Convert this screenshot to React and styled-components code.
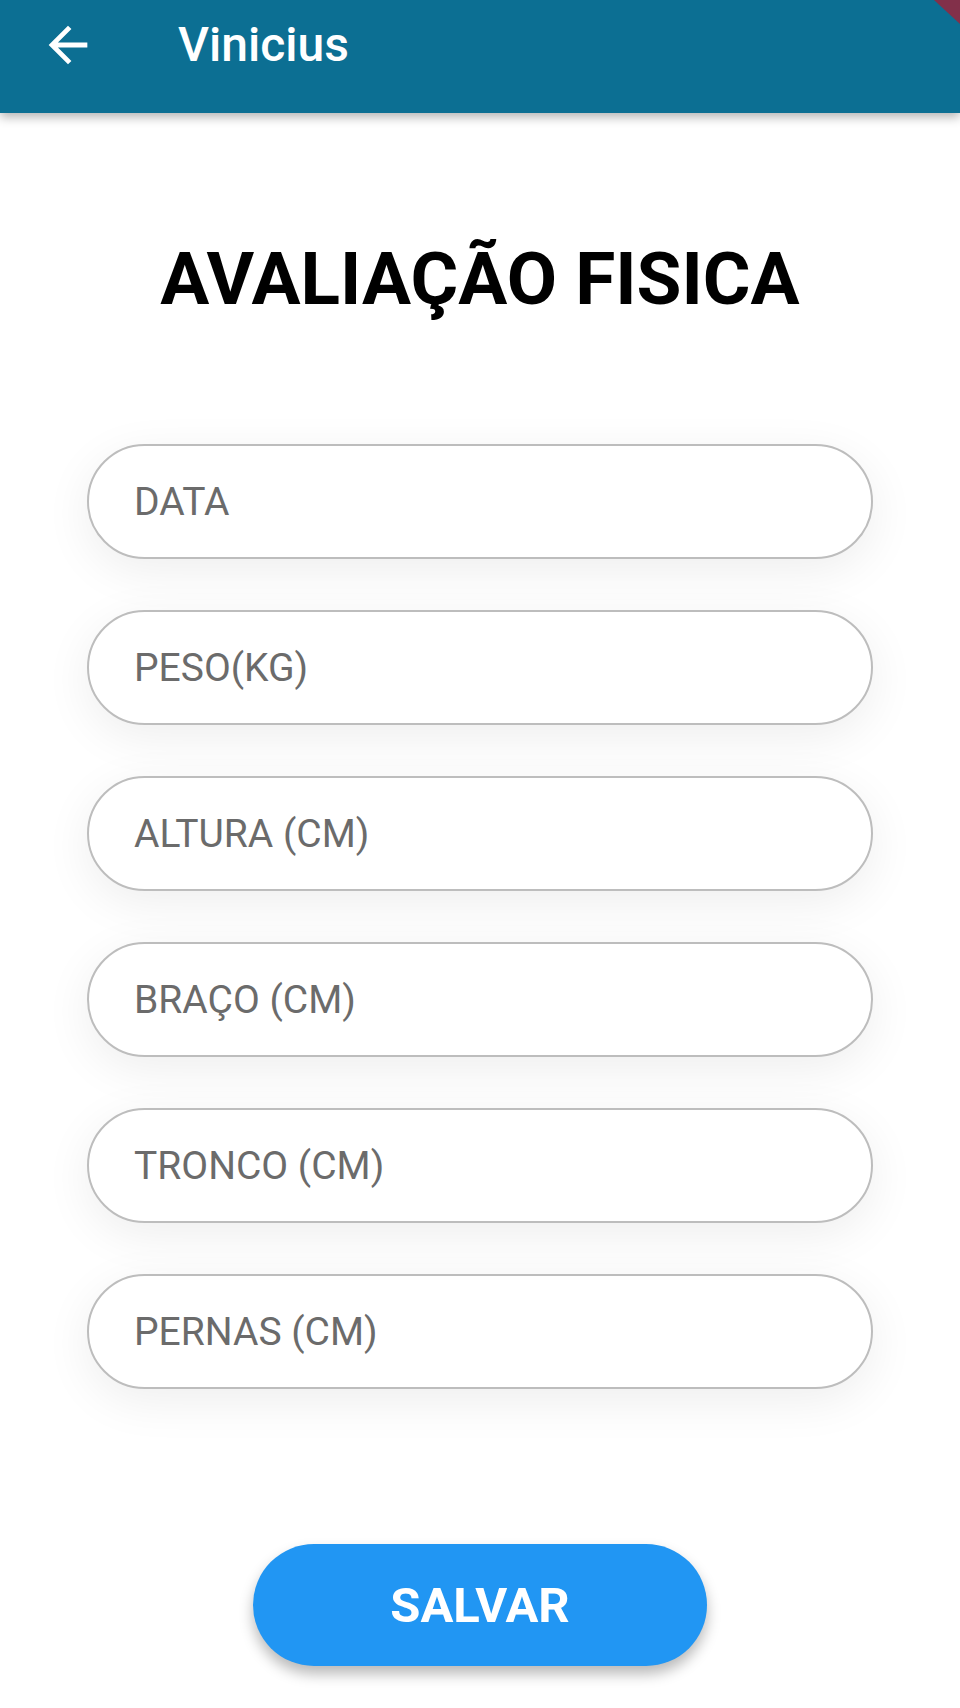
import React from "react";
import styled, { createGlobalStyle } from "styled-components";

const Global = createGlobalStyle`
  html, body { margin: 0; padding: 0; background: #ffffff; }
  body { font-family: Roboto, "Noto Sans", sans-serif; }
  * { box-sizing: border-box; }
`;

const Page = styled.div`
  position: relative;
  width: 960px;
  min-height: 1708px;
  background: #ffffff;
  overflow: hidden;
`;

const AppBar = styled.header`
  position: relative;
  z-index: 2;
  height: 113px;
  background: #0c6f93;
  box-shadow: 0 4px 10px rgba(0, 0, 0, 0.3);
  display: flex;
  align-items: flex-start;
  padding: 16px 0 0 39px;
`;

const BackButton = styled.button`
  width: 58px;
  height: 58px;
  padding: 0;
  border: none;
  background: transparent;
  color: #ffffff;
  display: flex;
  align-items: center;
  justify-content: center;
  cursor: pointer;
`;

const BarTitle = styled.h1`
  margin: 0 0 0 81px;
  font-family: Roboto, sans-serif;
  font-weight: 500;
  font-size: 48px;
  line-height: 58px;
  color: #ffffff;
  letter-spacing: 0;
`;

const DebugCorner = styled.div`
  position: absolute;
  top: 0;
  right: 0;
  width: 0;
  height: 0;
  border-top: 24px solid #82304a;
  border-left: 26px solid transparent;
  z-index: 3;
`;

const Content = styled.main`
  display: flex;
  flex-direction: column;
  align-items: center;
  padding-top: 130px;
`;

const Heading = styled.h2`
  margin: 0;
  font-family: Roboto, sans-serif;
  font-weight: 700;
  font-size: 73px;
  line-height: 73px;
  color: #000000;
  text-align: center;
`;

const Form = styled.form`
  width: 100%;
  display: flex;
  flex-direction: column;
  align-items: center;
  gap: 51px;
  margin-top: 128px;
`;

const Field = styled.input`
  width: 786px;
  height: 115px;
  border: 2px solid #bdbdbd;
  border-radius: 58px;
  background: #ffffff;
  padding: 0 0 0 45px;
  font-family: Roboto, sans-serif;
  font-size: 39px;
  color: #333333;
  box-shadow: 0 12px 48px rgba(0, 0, 0, 0.07);
  outline: none;
  &::placeholder {
    color: #6b6b6b;
    opacity: 1;
  }
`;

const SaveButton = styled.button`
  margin-top: 155px;
  width: 454px;
  height: 122px;
  border: none;
  border-radius: 61px;
  background: #2196f3;
  color: #ffffff;
  font-family: Roboto, sans-serif;
  font-weight: 700;
  font-size: 49px;
  letter-spacing: 0;
  box-shadow: 0 8px 14px rgba(0, 0, 0, 0.28);
  cursor: pointer;
`;

const fields = [
  "DATA",
  "PESO(KG)",
  "ALTURA (CM)",
  "BRAÇO (CM)",
  "TRONCO (CM)",
  "PERNAS (CM)",
];

function ArrowBack() {
  return (
    <svg width="58" height="58" viewBox="0 0 24 24" fill="currentColor">
      <path d="M20 11H7.83l5.59-5.59L12 4l-8 8 8 8 1.41-1.41L7.83 13H20v-2z" />
    </svg>
  );
}

export default function App() {
  return (
    <Page>
      <Global />
      <AppBar>
        <BackButton aria-label="Voltar">
          <ArrowBack />
        </BackButton>
        <BarTitle>Vinicius</BarTitle>
      </AppBar>
      <DebugCorner />
      <Content>
        <Heading>AVALIAÇÃO FISICA</Heading>
        <Form onSubmit={(e) => e.preventDefault()}>
          {fields.map((f) => (
            <Field key={f} placeholder={f} />
          ))}
        </Form>
        <SaveButton type="button">SALVAR</SaveButton>
      </Content>
    </Page>
  );
}
